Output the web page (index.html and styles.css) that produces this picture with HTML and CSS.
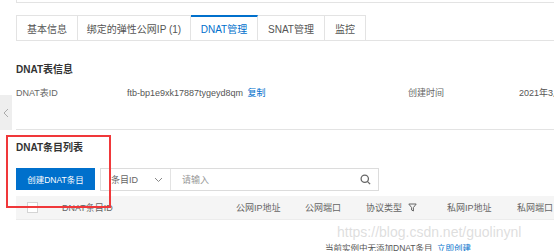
FILE: index.html
```html
<!DOCTYPE html>
<html lang="zh-CN">
<head>
    <meta charset="UTF-8">
    <title>DNAT管理</title>
    <link rel="stylesheet" href="styles.css">
</head>
<body>
    <div class="page">
        <div class="top-box"></div>

        <div class="tabs">
            <div class="tab tab-basic">基本信息</div>
            <div class="tab tab-eip">绑定的弹性公网IP (1)</div>
            <div class="tab tab-dnat active">DNAT管理</div>
            <div class="tab tab-snat">SNAT管理</div>
            <div class="tab tab-monitor">监控</div>
        </div>

        <div class="section-title info-title">DNAT表信息</div>
        <div class="info-row">
            <span class="label">DNAT表ID</span>
            <span class="value">ftb-bp1e9xk17887tygeyd8qm <a class="link">复制</a></span>
            <span class="label">创建时间</span>
            <span class="value">2021年3月15日 10:22:31</span>
        </div>
        <div class="divider"></div>

        <div class="section-title list-title">DNAT条目列表</div>
        <div class="toolbar">
            <button class="btn-primary">创建DNAT条目</button>
            <div class="search">
                <div class="search-select">
                    <span>条目ID</span>
                    <svg width="9" height="6" viewBox="0 0 9 6"><path d="M1 1l3.5 3.5L8 1" fill="none" stroke="#888" stroke-width="1"/></svg>
                </div>
                <div class="search-input">
                    <span class="placeholder">请输入</span>
                    <svg width="11" height="11" viewBox="0 0 12 12"><circle cx="5.2" cy="5.2" r="4" fill="none" stroke="#666" stroke-width="1.4"/><path d="M8 8l3 3" stroke="#666" stroke-width="1.4"/></svg>
                </div>
            </div>
        </div>

        <div class="table-head">
            <span class="cell cell-check"><span class="checkbox"></span></span>
            <span class="cell cell-id">DNAT条目ID</span>
            <span class="cell cell-pubip">公网IP地址</span>
            <span class="cell cell-pubport">公网端口</span>
            <span class="cell cell-proto">协议类型
                <svg width="9" height="9" viewBox="0 0 9 9"><path d="M0.8 1h7.4L5.4 4.6V8L3.6 7V4.6z" fill="none" stroke="#666" stroke-width="1"/></svg>
            </span>
            <span class="cell cell-privip">私网IP地址</span>
            <span class="cell cell-privport">私网端口</span>
        </div>
        <div class="empty">当前实例中无添加DNAT条目 <a class="link">立即创建</a></div>

        <div class="collapse-handle">
            <svg width="6" height="10" viewBox="0 0 6 10"><path d="M5 1L1 5l4 4" fill="none" stroke="#aaa" stroke-width="1"/></svg>
        </div>
        <div class="highlight"></div>
        <div class="watermark">https://blog.csdn.net/guolinynl</div>
    </div>
</body>
</html>
```

FILE: styles.css
```css
body {
    margin: 0;
    width: 554px;
    height: 251px;
    overflow: hidden;
    background: #fff;
    font-family: "Liberation Sans", "Noto Sans CJK SC", sans-serif;
    font-size: 9px;
    color: #333;
}

.page {
    position: relative;
    width: 760px;
    height: 251px;
    padding-left: 16px;
}

.top-box {
    height: 2px;
    border-left: 1px solid #e3e3e3;
    border-bottom: 1px solid #e3e3e3;
}

/* tabs */
.tabs {
    display: flex;
    margin-top: 12px;
    height: 25px;
    border-bottom: 1px solid #e3e3e3;
}

.tab {
    box-sizing: border-box;
    height: 25px;
    border: 1px solid #e3e3e3;
    border-left: none;
    border-bottom: none;
    display: flex;
    align-items: center;
    justify-content: center;
    font-size: 10px;
    color: #555;
}

.tab-basic { width: 62px; border-left: 1px solid #e3e3e3; }
.tab-eip { width: 113px; }
.tab-dnat { width: 67px; }
.tab-snat { width: 67px; }
.tab-monitor { width: 41px; }

.tab.active {
    border-top: 2px solid #0070cc;
    color: #0070cc;
}

/* sections */
.section-title {
    font-size: 10px;
    font-weight: bold;
    color: #333;
    line-height: 16px;
}

.info-title {
    margin-top: 21px;
}

.info-row {
    display: grid;
    grid-template-columns: 111px 281px 111px auto;
    margin-top: 7px;
    line-height: 16px;
    white-space: nowrap;
}

.label {
    color: #666;
}

.value {
    color: #555;
}

.link {
    color: #0070cc;
    margin-left: 2px;
}

.divider {
    margin-top: 28px;
    border-top: 1px solid #e3e3e3;
}

.list-title {
    margin-top: 10px;
}

/* toolbar */
.toolbar {
    display: flex;
    margin-top: 12px;
    height: 22px;
}

.btn-primary {
    width: 79px;
    height: 22px;
    border: none;
    border-radius: 0;
    background: #0070cc;
    color: #fff;
    font-family: inherit;
    font-size: 8.5px;
    padding: 0;
}

.search {
    display: flex;
    margin-left: 5px;
    border: 1px solid #dcdcdc;
    box-sizing: border-box;
    height: 23px;
}

.search-select {
    width: 70px;
    box-sizing: border-box;
    display: flex;
    align-items: center;
    justify-content: space-between;
    padding: 0 7px 0 10px;
    border-right: 1px solid #e3e3e3;
    color: #666;
}

.search-input {
    width: 207px;
    box-sizing: border-box;
    display: flex;
    align-items: center;
    justify-content: space-between;
    padding: 0 7px 0 11px;
}

.placeholder {
    color: #999;
}

/* table */
.table-head {
    display: grid;
    grid-template-columns: 46px 174px 69px 61px 81px 70px auto;
    align-items: center;
    margin-top: 6px;
    height: 23px;
    background: #f5f5f5;
    border-bottom: 1px solid #ececec;
    color: #666;
    white-space: nowrap;
}

.cell-check {
    padding-left: 11px;
    display: flex;
}

.checkbox {
    width: 9px;
    height: 9px;
    border: 1px solid #d4d4d4;
    background: #fff;
}

.cell-proto svg {
    margin-left: 3px;
    vertical-align: -1px;
}

.empty {
    margin-top: 20px;
    line-height: 16px;
    padding-left: 309px;
    font-size: 8.5px;
    color: #555;
    white-space: nowrap;
}

/* overlays */
.collapse-handle {
    position: absolute;
    left: 0;
    top: 95px;
    width: 12px;
    height: 35px;
    background: #eeeeee;
    display: flex;
    align-items: center;
    justify-content: center;
}

.highlight {
    position: absolute;
    left: 6px;
    top: 135px;
    width: 101px;
    height: 69px;
    border: 2px solid #f0383a;
}

.watermark {
    position: absolute;
    left: 337px;
    top: 224px;
    font-family: "Liberation Sans", sans-serif;
    font-size: 14px;
    color: rgba(200, 200, 200, 0.6);
    white-space: nowrap;
}
```
